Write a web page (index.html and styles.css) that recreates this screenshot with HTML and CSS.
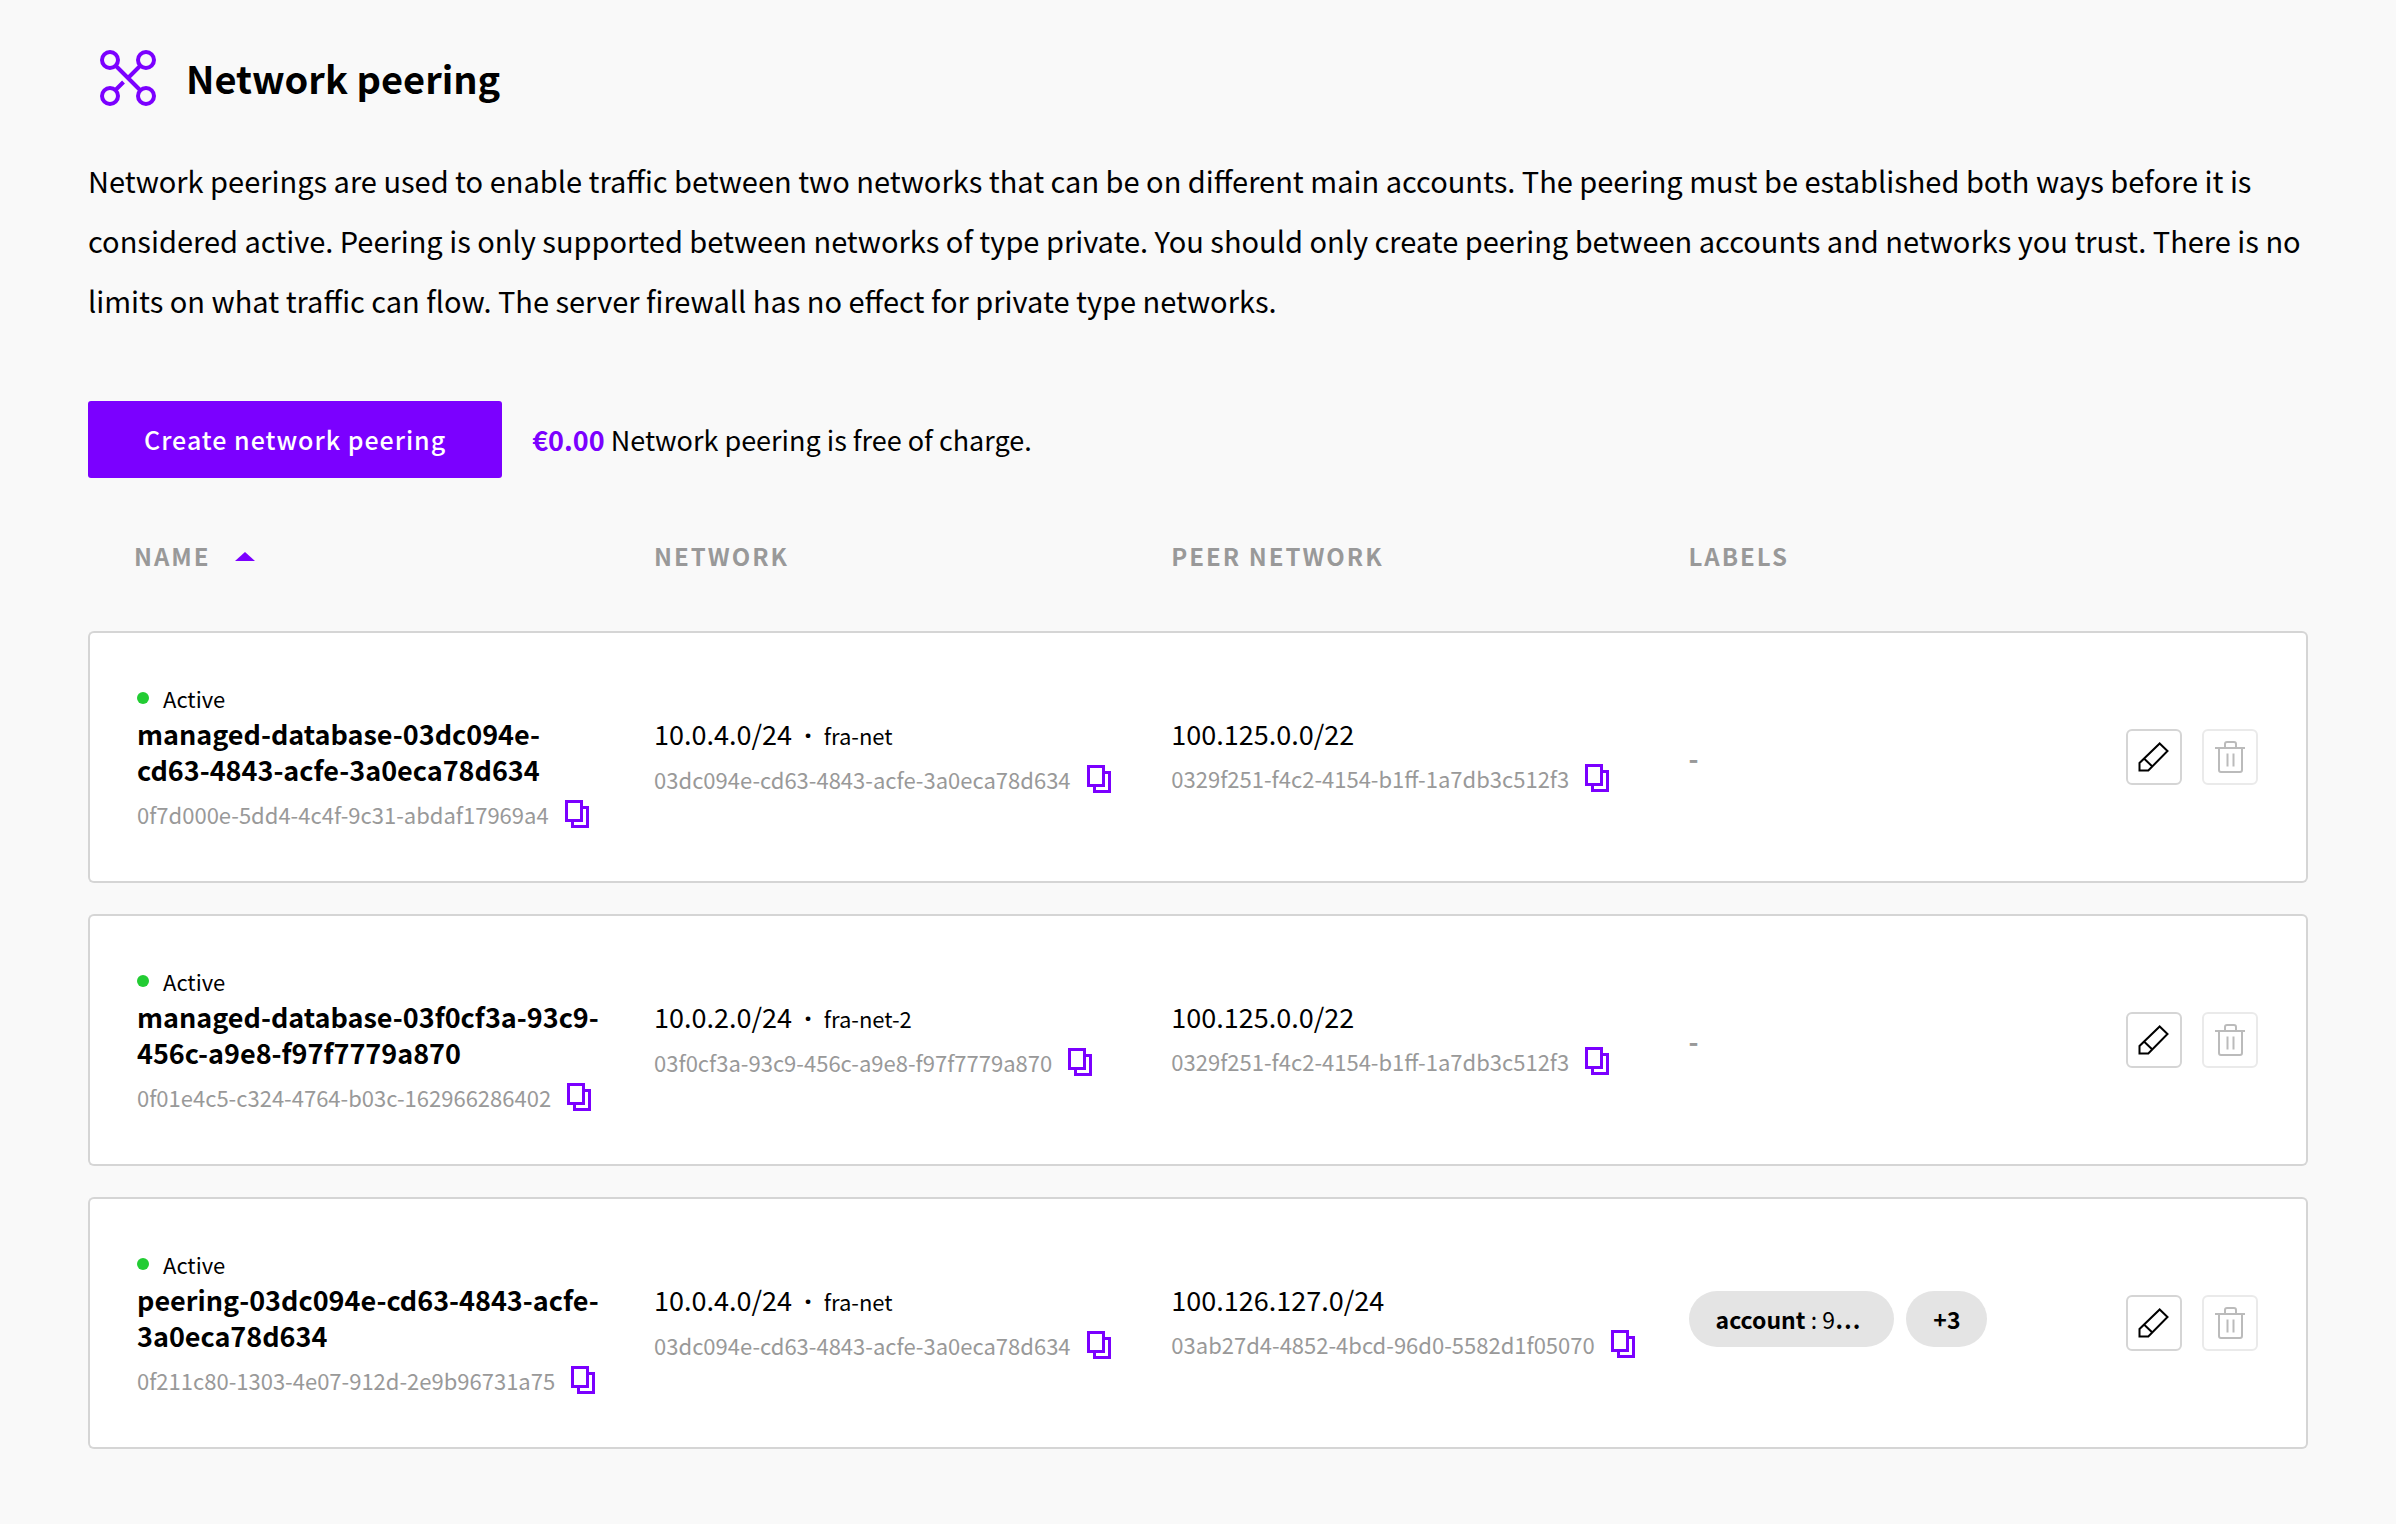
FILE: index.html
```html
<!DOCTYPE html>
<html lang="en">
<head>
    <meta charset="UTF-8">
    <meta name="viewport" content="width=device-width, initial-scale=1.0">
    <title>Network peering</title>
    <link rel="stylesheet" href="styles.css">
</head>
<body>
    <!-- Shared icons -->
    <svg class="sprite" aria-hidden="true">
        <symbol id="icon-copy" viewBox="0 0 24 28">
            <path d="M1.5 1.5h15v19h-15z M16.5 7.5h6v19h-15v-6"/>
        </symbol>
        <symbol id="icon-edit" viewBox="0 0 32 32">
            <path d="M21.7 2.5l7.8 7.5-19.2 19.5H1.5v-7.5z M6 17.5l7.8 7.5"/>
        </symbol>
        <symbol id="icon-trash" viewBox="0 0 32 32">
            <path d="M1 7h30 M11 7V3q0-2 2-2h7q2 0 2 2v4 M5 7v22q0 2 2 2h19q2 0 2-2V7 M13.5 12.5v13 M19.5 12.5v13"/>
        </symbol>
    </svg>

    <main class="page">
        <header class="page-header">
            <svg class="page-icon" viewBox="0 0 56 56" aria-hidden="true">
                <circle cx="10" cy="10" r="8"/>
                <circle cx="46" cy="10" r="8"/>
                <circle cx="10" cy="46" r="8"/>
                <circle cx="46" cy="46" r="8"/>
                <path d="M16 16l24 24 M40 16L28 28 M23.5 32L16 39.5"/>
            </svg>
            <h1>Network peering</h1>
        </header>

        <p class="intro">Network peerings are used to enable traffic between two networks that can be on different main accounts. The peering must be established both ways before it is considered active. Peering is only supported between networks of type private. You should only create peering between accounts and networks you trust. There is no limits on what traffic can flow. The server firewall has no effect for private type networks.</p>

        <div class="toolbar">
            <button class="create-button" type="button">Create network peering</button>
            <p class="price"><strong>€0.00</strong> Network peering is free of charge.</p>
        </div>

        <table class="peerings">
            <thead>
                <tr>
                    <th class="col-name" aria-sort="ascending"><button class="sort-button" type="button">Name <span class="sort-arrow"></span></button></th>
                    <th class="col-network">Network</th>
                    <th class="col-network">Peer network</th>
                    <th>Labels</th>
                    <th class="col-actions"></th>
                </tr>
            </thead>
            <tbody>
                <tr>
                    <td>
                        <div class="status">Active</div>
                        <div class="name">managed-database-03dc094e-cd63-4843-acfe-3a0eca78d634</div>
                        <div class="uuid">0f7d000e-5dd4-4c4f-9c31-abdaf17969a4 <button class="copy-button" type="button" aria-label="Copy"><svg><use href="#icon-copy"/></svg></button></div>
                    </td>
                    <td>
                        <div class="address">10.0.4.0/24 <span class="dot">·</span> <span class="net-name">fra-net</span></div>
                        <div class="uuid">03dc094e-cd63-4843-acfe-3a0eca78d634 <button class="copy-button" type="button" aria-label="Copy"><svg><use href="#icon-copy"/></svg></button></div>
                    </td>
                    <td>
                        <div class="address">100.125.0.0/22</div>
                        <div class="uuid">0329f251-f4c2-4154-b1ff-1a7db3c512f3 <button class="copy-button" type="button" aria-label="Copy"><svg><use href="#icon-copy"/></svg></button></div>
                    </td>
                    <td><span class="empty">-</span></td>
                    <td>
                        <div class="actions">
                            <button class="icon-button" type="button" aria-label="Edit"><svg><use href="#icon-edit"/></svg></button>
                            <button class="icon-button" type="button" aria-label="Delete" disabled><svg><use href="#icon-trash"/></svg></button>
                        </div>
                    </td>
                </tr>
                <tr>
                    <td>
                        <div class="status">Active</div>
                        <div class="name">managed-database-03f0cf3a-93c9-456c-a9e8-f97f7779a870</div>
                        <div class="uuid">0f01e4c5-c324-4764-b03c-162966286402 <button class="copy-button" type="button" aria-label="Copy"><svg><use href="#icon-copy"/></svg></button></div>
                    </td>
                    <td>
                        <div class="address">10.0.2.0/24 <span class="dot">·</span> <span class="net-name">fra-net-2</span></div>
                        <div class="uuid">03f0cf3a-93c9-456c-a9e8-f97f7779a870 <button class="copy-button" type="button" aria-label="Copy"><svg><use href="#icon-copy"/></svg></button></div>
                    </td>
                    <td>
                        <div class="address">100.125.0.0/22</div>
                        <div class="uuid">0329f251-f4c2-4154-b1ff-1a7db3c512f3 <button class="copy-button" type="button" aria-label="Copy"><svg><use href="#icon-copy"/></svg></button></div>
                    </td>
                    <td><span class="empty">-</span></td>
                    <td>
                        <div class="actions">
                            <button class="icon-button" type="button" aria-label="Edit"><svg><use href="#icon-edit"/></svg></button>
                            <button class="icon-button" type="button" aria-label="Delete" disabled><svg><use href="#icon-trash"/></svg></button>
                        </div>
                    </td>
                </tr>
                <tr>
                    <td>
                        <div class="status">Active</div>
                        <div class="name">peering-03dc094e-cd63-4843-acfe-3a0eca78d634</div>
                        <div class="uuid">0f211c80-1303-4e07-912d-2e9b96731a75 <button class="copy-button" type="button" aria-label="Copy"><svg><use href="#icon-copy"/></svg></button></div>
                    </td>
                    <td>
                        <div class="address">10.0.4.0/24 <span class="dot">·</span> <span class="net-name">fra-net</span></div>
                        <div class="uuid">03dc094e-cd63-4843-acfe-3a0eca78d634 <button class="copy-button" type="button" aria-label="Copy"><svg><use href="#icon-copy"/></svg></button></div>
                    </td>
                    <td>
                        <div class="address">100.126.127.0/24</div>
                        <div class="uuid">03ab27d4-4852-4bcd-96d0-5582d1f05070 <button class="copy-button" type="button" aria-label="Copy"><svg><use href="#icon-copy"/></svg></button></div>
                    </td>
                    <td>
                        <div class="labels">
                            <span class="label label-cut"><b>account</b> : 9<b>…</b></span>
                            <span class="label"><b>+3</b></span>
                        </div>
                    </td>
                    <td>
                        <div class="actions">
                            <button class="icon-button" type="button" aria-label="Edit"><svg><use href="#icon-edit"/></svg></button>
                            <button class="icon-button" type="button" aria-label="Delete" disabled><svg><use href="#icon-trash"/></svg></button>
                        </div>
                    </td>
                </tr>
            </tbody>
        </table>
    </main>
</body>
</html>
```
FILE: styles.css
```css
* {
    box-sizing: border-box;
}
body {
    margin: 0;
    background-color: #f9f9f9;
    color: #000;
    font-family: "Noto Sans CJK SC", "Noto Sans", sans-serif;
    font-size: 27px;
}
button {
    font: inherit;
    color: inherit;
    padding: 0;
    border: none;
    background: none;
    cursor: pointer;
}
svg {
    display: block;
    fill: none;
    stroke: currentColor;
}
.sprite {
    display: none;
}
.page {
    padding: 46px 88px;
}
.page-header {
    display: flex;
    align-items: center;
    gap: 30px;
    padding-left: 12px;
}
.page-icon {
    width: 56px;
    height: 56px;
    color: #7b00ff;
    stroke-width: 4;
}
h1 {
    margin: 0;
    font-size: 38px;
    font-weight: 700;
    line-height: 64px;
}
.intro {
    margin: 40px 0 71px;
    font-size: 29px;
    line-height: 60px;
}
.toolbar {
    display: flex;
    align-items: center;
    gap: 30px;
}
.create-button {
    padding: 0 56px;
    border-radius: 3px;
    background-color: #7b00ff;
    color: #fff;
    font-size: 25px;
    font-weight: 500;
    line-height: 77px;
    letter-spacing: 1px;
}
.price {
    margin: 0;
    line-height: 36px;
}
.price strong {
    color: #7b00ff;
}

/* Each table row is drawn as a card */
.peerings {
    width: 100%;
    margin-top: 28px;
    border-collapse: separate;
    border-spacing: 0 31px;
    table-layout: fixed;
}
.col-name {
    width: 25.5%;
}
.col-network {
    width: 23.3%;
}
.col-actions {
    width: 10%;
}
th {
    padding: 0 0 25px;
    color: #999;
    font-size: 24px;
    font-weight: 700;
    line-height: 38px;
    letter-spacing: 2px;
    text-align: left;
    text-transform: uppercase;
}
th:first-child {
    padding-left: 46px;
}
.sort-button {
    display: flex;
    align-items: center;
    gap: 24px;
    letter-spacing: inherit;
    text-transform: inherit;
}
.sort-arrow {
    border: 10px solid transparent;
    border-top: none;
    border-bottom: 9px solid #7b00ff;
}
td {
    height: 252px;
    padding: 0;
    border: 2px solid #d5d5d5;
    border-width: 2px 0;
    background-color: #fff;
}
td:first-child {
    padding: 0 46px 0 47px;
    border-left-width: 2px;
    border-radius: 6px 0 0 6px;
}
td:last-child {
    padding-right: 48px;
    border-right-width: 2px;
    border-radius: 0 6px 6px 0;
}
.status {
    display: flex;
    align-items: center;
    gap: 14px;
    font-size: 22px;
    line-height: 36px;
}
.status::before {
    content: "";
    width: 12px;
    height: 12px;
    border-radius: 50%;
    background-color: #22cc33;
}
.name {
    font-weight: 700;
    line-height: 36px;
}
.address {
    line-height: 36px;
}
.dot {
    margin: 0 6px;
    font-family: "Noto Sans", sans-serif;
    font-weight: 700;
}
.net-name {
    font-size: 22px;
}
.uuid {
    display: flex;
    align-items: center;
    gap: 16px;
    padding-top: 6px;
    color: #999;
    font-size: 22px;
    line-height: 40px;
    white-space: nowrap;
}
.copy-button {
    color: #7b00ff;
}
.copy-button svg {
    width: 24px;
    height: 28px;
    stroke-width: 3;
}
.empty {
    color: #999;
    font-weight: 700;
}
.labels {
    display: flex;
    gap: 12px;
    margin-bottom: 8px;
    white-space: nowrap;
}
.label {
    padding: 0 27px;
    border-radius: 28px;
    background-color: #e4e4e4;
    font-size: 23px;
    line-height: 56px;
}
.label-cut {
    padding-right: 34px;
}
.label b {
    font-weight: 700;
}
.actions {
    display: flex;
    justify-content: flex-end;
    gap: 20px;
}
.icon-button {
    padding: 10px;
    border: 2px solid #d5d5d5;
    border-radius: 6px;
}
.icon-button svg {
    width: 32px;
    height: 32px;
    stroke-width: 2;
}
.icon-button:disabled {
    border-color: #eaeaea;
    color: #bbb;
    cursor: not-allowed;
}
```
